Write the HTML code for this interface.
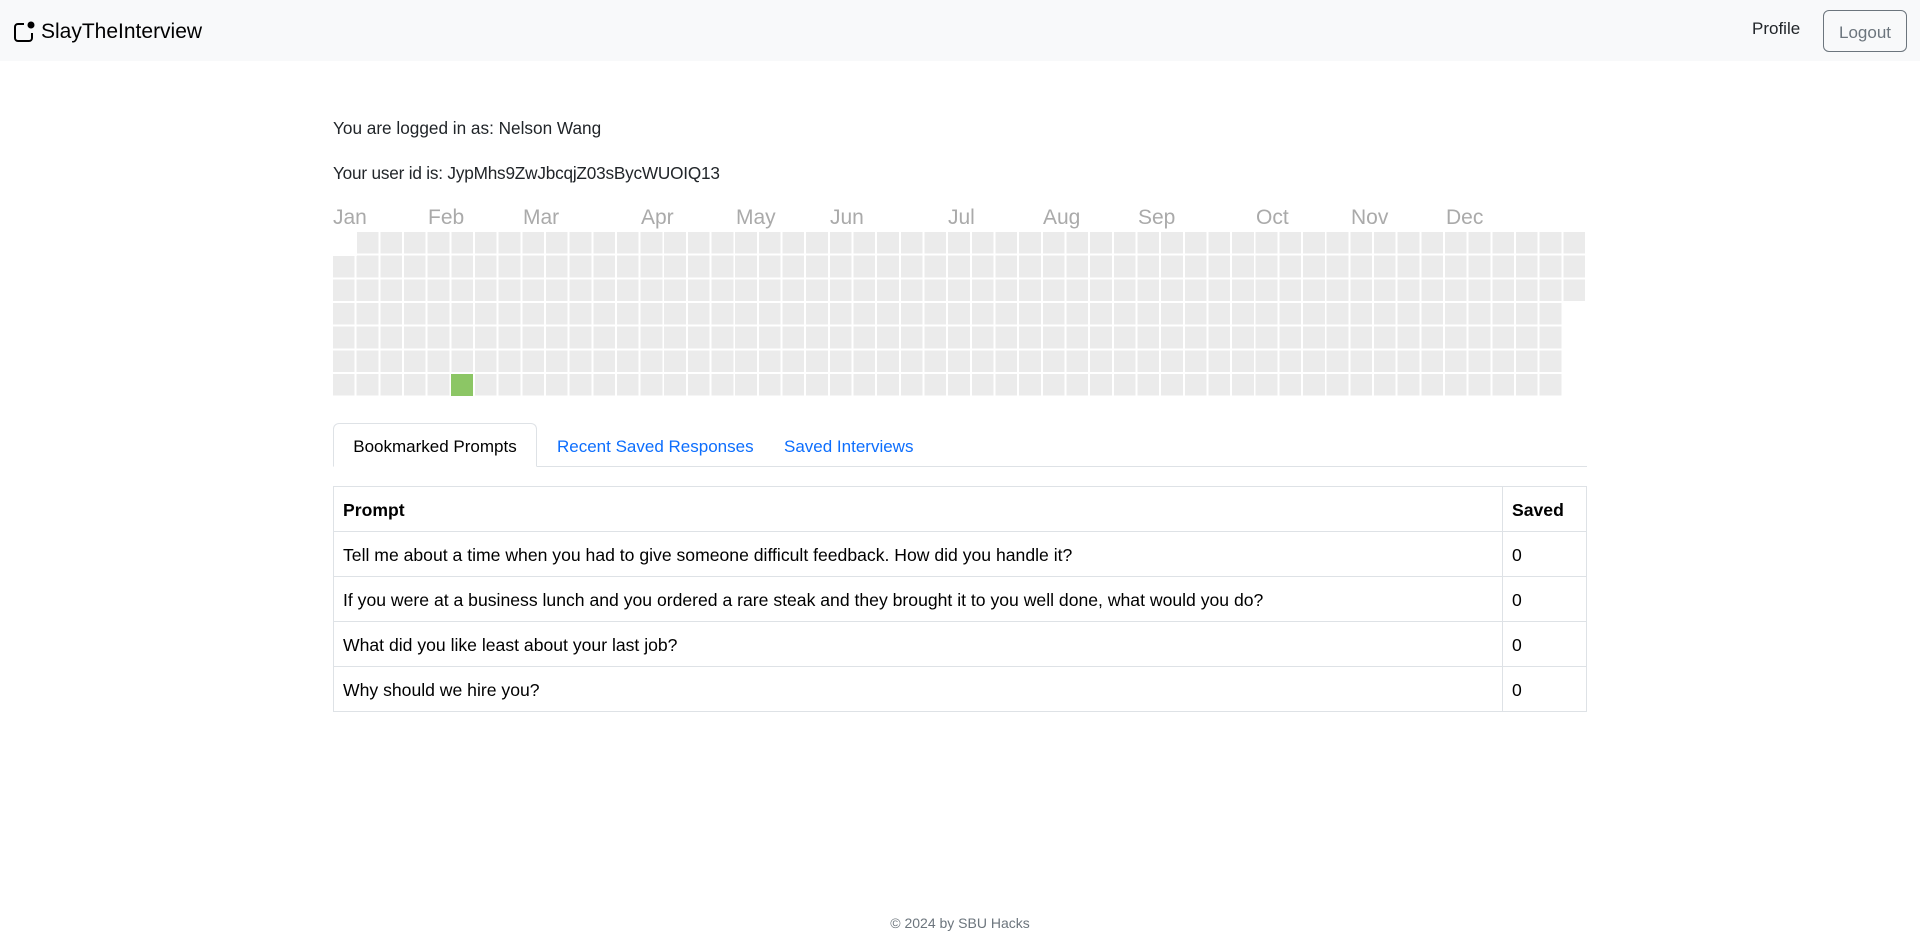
<!DOCTYPE html>
<html><head><meta charset="utf-8"><style>
*{box-sizing:border-box;margin:0;padding:0}
body{width:1920px;height:952px;background:#fff;font-family:"Liberation Sans",sans-serif;color:#212529;position:relative;overflow:hidden}
.nav{position:absolute;left:0;top:0;width:1920px;height:61px;background:#f8f9fa}
.brand{position:absolute;left:41px;top:20px;font-size:21px;color:#000}
.prof{position:absolute;left:1752px;top:19px;font-size:17px;color:#212529}
.logout{position:absolute;left:1823px;top:10px;width:84px;height:42px;border:1px solid #6c757d;border-radius:6px;color:#6c757d;font-size:17px;text-align:center;line-height:43px}
.t{position:absolute;left:333px;font-size:17.2px}
.m{position:absolute;top:206px;font-size:21px;color:#aaa}
.grid{position:absolute;left:333px;top:232px;width:1254px;height:163.9px;background:
repeating-linear-gradient(to right,transparent 0 21.7px,#fff 21.7px 23.66px),
repeating-linear-gradient(to bottom,transparent 0 21.7px,#fff 21.7px 23.66px),#ebebeb}
.tabs{position:absolute;left:333px;top:466px;width:1254px;border-bottom:1px solid #dee2e6}
.tab{position:absolute;top:423px;height:44px;font-size:17px;line-height:48px;color:#0d6efd}
.active{left:333px;width:204px;border:1px solid #dee2e6;border-bottom:1px solid #fff;border-radius:6px 6px 0 0;color:#000;text-align:center;background:#fff;line-height:46px}
table{position:absolute;left:333px;top:486px;width:1254px;border-collapse:collapse;font-size:17.6px}
td,th{border:1px solid #dee2e6;height:45px;padding:3px 9px 0;text-align:left;color:#000}
th{font-weight:bold}
.foot{position:absolute;left:0;width:1920px;top:915px;text-align:center;font-size:14px;color:#6c757d}
</style></head><body>
<div class="nav">
<svg style="position:absolute;left:13px;top:20px" width="24" height="24" viewBox="0 0 24 24"><path d="M11 4H5a3 3 0 0 0-3 3v11a3 3 0 0 0 3 3h11a3 3 0 0 0 3-3v-5" fill="none" stroke="#000" stroke-width="2"/><circle cx="18" cy="5" r="3.5" fill="#000"/></svg>
<div class="brand">SlayTheInterview</div>
<div class="prof">Profile</div>
<div class="logout">Logout</div>
</div>
<div class="t" style="top:118px">You are logged in as: Nelson Wang</div>
<div class="t" style="top:163px;letter-spacing:-0.2px">Your user id is: JypMhs9ZwJbcqjZ03sBycWUOIQ13</div>
<div class="m" style="left:333px">Jan</div>
<div class="m" style="left:428px">Feb</div>
<div class="m" style="left:523px">Mar</div>
<div class="m" style="left:641px">Apr</div>
<div class="m" style="left:736px">May</div>
<div class="m" style="left:830px">Jun</div>
<div class="m" style="left:948px">Jul</div>
<div class="m" style="left:1043px">Aug</div>
<div class="m" style="left:1138px">Sep</div>
<div class="m" style="left:1256px">Oct</div>
<div class="m" style="left:1351px">Nov</div>
<div class="m" style="left:1446px">Dec</div>
<div class="grid"></div>
<div style="position:absolute;left:333px;top:232px;width:23.66px;height:23.66px;background:#fff"></div>
<div style="position:absolute;left:1563.3px;top:303px;width:30px;height:100px;background:#fff"></div>
<div style="position:absolute;left:451.3px;top:374px;width:21.7px;height:21.7px;background:#8cc665"></div>
<div class="tabs"></div>
<div class="tab active">Bookmarked Prompts</div>
<div class="tab" style="left:557px">Recent Saved Responses</div>
<div class="tab" style="left:784px">Saved Interviews</div>
<table>
<tr><th>Prompt</th><th style="width:84px">Saved</th></tr>
<tr><td>Tell me about a time when you had to give someone difficult feedback. How did you handle it?</td><td>0</td></tr>
<tr><td>If you were at a business lunch and you ordered a rare steak and they brought it to you well done, what would you do?</td><td>0</td></tr>
<tr><td>What did you like least about your last job?</td><td>0</td></tr>
<tr><td>Why should we hire you?</td><td>0</td></tr>
</table>
<div class="foot">© 2024 by SBU Hacks</div>
</body></html>
